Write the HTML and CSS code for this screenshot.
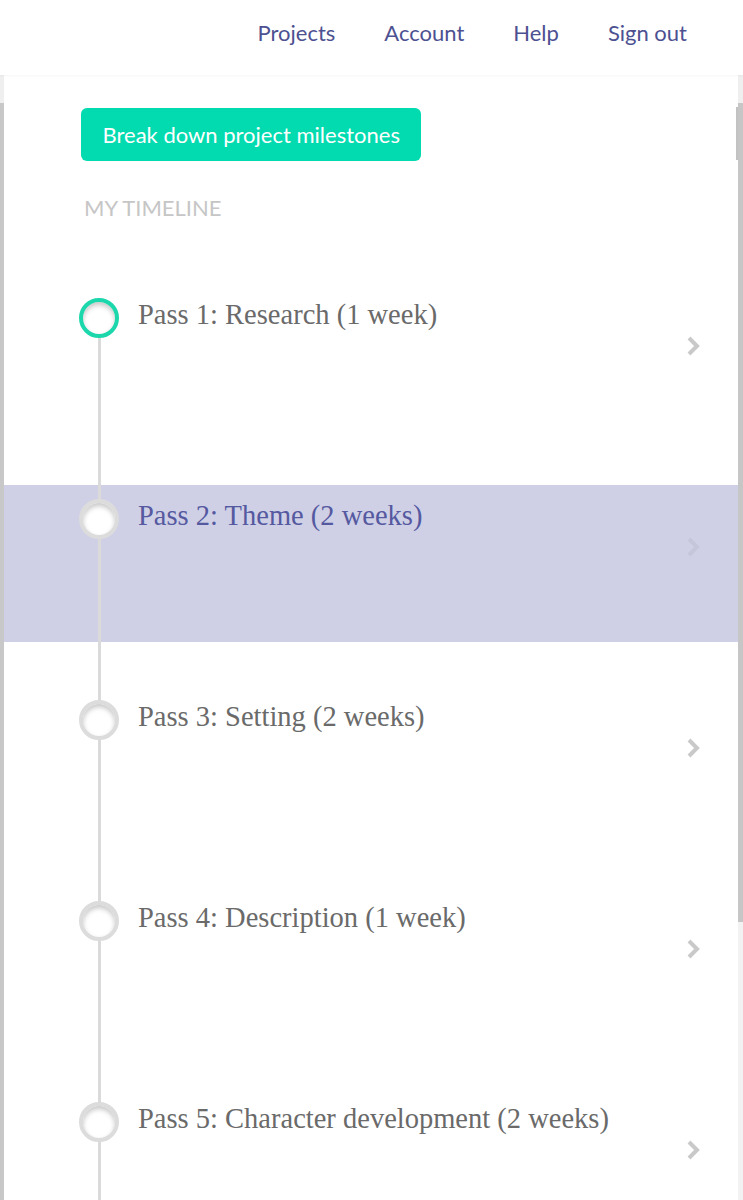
FILE: index.html
```html
<!DOCTYPE html>
<html lang="en">
<head>
<meta charset="utf-8">
<title>My timeline</title>
<link rel="stylesheet" href="styles.css">
</head>
<body>
<header class="topbar">
  <nav class="topnav">
    <a class="topnav__link" href="#">Projects</a>
    <a class="topnav__link" href="#">Account</a>
    <a class="topnav__link" href="#">Help</a>
    <a class="topnav__link" href="#">Sign out</a>
  </nav>
</header>
<div class="frame">
  <main class="panel">
    <div class="intro">
      <button class="cta" type="button">Break down project milestones</button>
      <h2 class="section-label">My timeline</h2>
    </div>
    <ol class="timeline">
      <li class="step step--active">
        <span class="step__dot"></span>
        <span class="step__title">Pass 1: Research (1 week)</span>
        <svg class="step__chevron" viewBox="0 0 14 22" width="14" height="22"><path d="M3 3 L11 11 L3 19"/></svg>
      </li>
      <li class="step step--selected">
        <span class="step__dot"></span>
        <span class="step__title">Pass 2: Theme (2 weeks)</span>
        <svg class="step__chevron" viewBox="0 0 14 22" width="14" height="22"><path d="M3 3 L11 11 L3 19"/></svg>
      </li>
      <li class="step">
        <span class="step__dot"></span>
        <span class="step__title">Pass 3: Setting (2 weeks)</span>
        <svg class="step__chevron" viewBox="0 0 14 22" width="14" height="22"><path d="M3 3 L11 11 L3 19"/></svg>
      </li>
      <li class="step">
        <span class="step__dot"></span>
        <span class="step__title">Pass 4: Description (1 week)</span>
        <svg class="step__chevron" viewBox="0 0 14 22" width="14" height="22"><path d="M3 3 L11 11 L3 19"/></svg>
      </li>
      <li class="step">
        <span class="step__dot"></span>
        <span class="step__title">Pass 5: Character development (2 weeks)</span>
        <svg class="step__chevron" viewBox="0 0 14 22" width="14" height="22"><path d="M3 3 L11 11 L3 19"/></svg>
      </li>
    </ol>
  </main>
</div>
</body>
</html>
```

FILE: styles.css
```css
* {
  box-sizing: border-box;
}

html, body {
  margin: 0;
  padding: 0;
  background: #ffffff;
  overflow: hidden;
}

body {
  font-family: Lato, "Liberation Sans", sans-serif;
}

.topbar {
  height: 75px;
  background: #ffffff;
  position: relative;
  z-index: 2;
  box-shadow: 0 1px 2px rgba(0, 0, 0, 0.04);
}

.topnav {
  display: flex;
  justify-content: flex-end;
  align-items: flex-start;
  gap: 49px;
  padding: 20px 56px 0 0;
}

.topnav__link {
  font-size: 22px;
  line-height: 26px;
  color: #4d5191;
  text-decoration: none;
}

.frame {
  padding: 0 5px 0 4px;
  min-height: 1125px;
  background:
    linear-gradient(#efefef 0 28px, #c8c8c8 28px) left top / 4px 100% no-repeat,
    linear-gradient(#efefef 0 28px, #c6c6c6 28px 847px, #f2f2f2 847px) right top / 5px 100% no-repeat;
}

.panel {
  position: relative;
  background: #ffffff;
  min-height: 1125px;
  padding-top: 33px;
}

.panel::after {
  content: "";
  position: absolute;
  right: 0;
  top: 32px;
  width: 2px;
  height: 53px;
  background: #c2c2c2;
}

.intro {
  padding-left: 77px;
}

.cta {
  display: block;
  border: 0;
  margin: 0;
  border-radius: 6px;
  background: #02dbb0;
  color: #ffffff;
  font-family: Lato, "Liberation Sans", sans-serif;
  font-size: 22px;
  line-height: 27px;
  padding: 13px 21.5px;
}

.section-label {
  margin: 34px 0 63px 3px;
  font-weight: 400;
  font-size: 22px;
  line-height: 26px;
  text-transform: uppercase;
  color: #c6c6c6;
}

.timeline {
  list-style: none;
  margin: 0;
  padding: 0;
  position: relative;
}

.timeline::before {
  content: "";
  position: absolute;
  left: 94px;
  top: 34px;
  bottom: 0;
  width: 3px;
  background: #dadada;
  z-index: 1;
}

.step {
  display: flex;
  align-items: flex-start;
  height: 157px;
  margin-bottom: 44px;
  padding-left: 75px;
}

.step__dot {
  position: relative;
  z-index: 2;
  flex: 0 0 40px;
  width: 40px;
  height: 40px;
  margin-top: 14px;
  border-radius: 50%;
  border: 4px solid #dcdcdc;
  background: #ffffff;
  box-shadow: inset 0 3px 5px rgba(0, 0, 0, 0.22);
}

.step--active .step__dot {
  border-color: #1dd7ac;
}

.step__title {
  margin: 17px 0 0 19px;
  font-family: "Liberation Serif", serif;
  font-size: 28.5px;
  line-height: 28px;
  color: #6a6a6a;
  white-space: nowrap;
}

.step__chevron {
  margin: 51px 38px 0 auto;
  flex: 0 0 14px;
}

.step__chevron path {
  fill: none;
  stroke: #c9c9c9;
  stroke-width: 4;
}

.step--selected {
  background: #cfd0e6;
}

.step--selected .step__title {
  color: #5559a0;
}

.step--selected .step__chevron path {
  stroke: #c5c6da;
}
```
